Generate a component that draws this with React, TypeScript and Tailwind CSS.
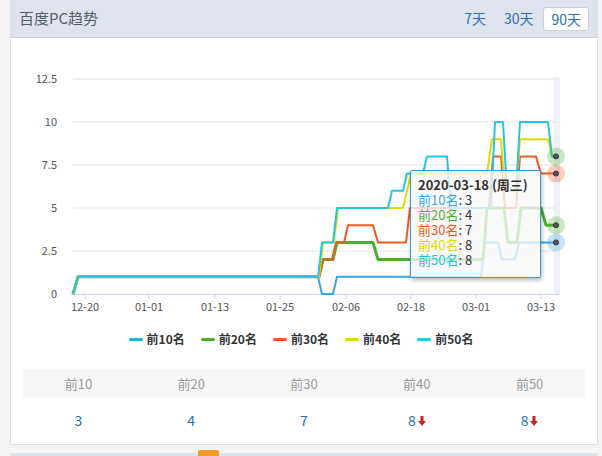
const Y = (v: number) => 294 - v * 17.2;

type S = { name: string; color: string; w: number; pts: [number, number][] };

const series: S[] = [
  { name: "前10名", color: "#3aa6df", w: 2, pts: [[72, 0], [77, 1], [317, 1], [321, 0], [332, 0], [336, 1], [480, 1], [484, 3], [497, 3], [501, 2], [514, 2], [518, 3], [555, 3]] },
  { name: "前20名", color: "#4caf2d", w: 3, pts: [[72, 0], [77, 1], [318, 1], [322, 2], [332, 2], [336, 3], [372, 3], [377, 2], [482, 2], [486, 5], [503, 5], [507, 3], [516, 3], [520, 5], [540, 5], [545, 4], [555, 4]] },
  { name: "前30名", color: "#f05a22", w: 2, pts: [[72, 0], [77, 1], [318, 1], [322, 2], [331, 2], [335, 3], [343, 3], [347, 4], [372, 4], [377, 3], [405, 3], [409, 5], [488, 5], [492, 8], [500, 8], [504, 5], [515, 5], [519, 8], [535, 8], [540, 7], [555, 7]] },
  { name: "前40名", color: "#dedc00", w: 2, pts: [[72, 0], [77, 1], [318, 1], [322, 3], [333, 3], [337, 5], [402, 5], [406, 6], [410, 7], [486, 7], [491, 9], [500, 9], [504, 6], [515, 6], [519, 9], [547, 9], [551, 8], [555, 8]] },
  { name: "前50名", color: "#26c4e4", w: 2, pts: [[72, 0], [77, 1], [317, 1], [321, 3], [332, 3], [336, 5], [387, 5], [391, 6], [402, 6], [406, 7], [422, 7], [426, 8], [446, 8], [450, 5], [490, 5], [494, 10], [502, 10], [506, 6], [515, 6], [519, 10], [547, 10], [551, 8], [555, 8]] },
];

const d = (pts: [number, number][]) => pts.map((p, i) => `${i ? "L" : "M"}${p[0]} ${Y(p[1])}`).join(" ");

const xLabels: [string, number][] = [["12-20", 84], ["01-01", 148], ["01-13", 214], ["01-25", 279], ["02-06", 345], ["02-18", 410], ["03-01", 475], ["03-13", 540]];
const yLabels = [0, 2.5, 5, 7.5, 10, 12.5];
const marks: [number, string][] = [[8, "#4caf2d"], [7, "#f05a22"], [4, "#4caf2d"], [3, "#3aa6df"]];

const Arrow = () => (
  <svg width="8" height="10" viewBox="0 0 8 10" className="ml-[2px] mt-[2px]">
    <path d="M2.5 0h3v5h2.5L4 10 0 5h2.5z" fill="#c0262d" />
  </svg>
);

export default function App() {
  const font = { fontFamily: '"Microsoft YaHei","Noto Sans CJK SC",sans-serif' };
  return (
    <div className="w-[602px] h-[456px] bg-[#f4f4f4] pl-[10px] pr-[4px] overflow-hidden" style={font}>
      <div className="bg-white border border-[#dcdfe6] border-t-0">
        <div className="h-[38px] bg-[#dfe3ee] border-b border-[#c9cfdd] flex items-center px-[8px]">
          <span className="text-[15px] text-[#555b6a]">百度PC趋势</span>
          <div className="ml-auto flex items-center gap-[2px] text-[14px] text-[#2c6fb3]">
            <span className="px-[8px]">7天</span>
            <span className="px-[8px]">30天</span>
            <span className="px-[7px] py-[1px] bg-white border border-[#c9cfdd] rounded-[3px] leading-[20px]">90天</span>
          </div>
        </div>
        <div className="relative h-[282px]">
          <svg width="588" height="282" viewBox="10 38 588 282" className="block">
            <rect x="553" y="77" width="6" height="217" fill="#eef1f8" />
            {yLabels.map((v) => (
              <g key={v}>
                {v > 0 && <line x1="72" x2="555" y1={Y(v)} y2={Y(v)} stroke="#e4e4e4" />}
                <text x="56" y={Y(v) + 4} textAnchor="end" fontSize="11" fill="#555">{v}</text>
              </g>
            ))}
            <line x1="70" x2="558" y1="294.5" y2="294.5" stroke="#c8d3e6" />
            {xLabels.map(([t, x]) => (
              <g key={t}>
                <line x1={x} x2={x} y1="294" y2="299" stroke="#c8d3e6" />
                <text x={x} y="311" textAnchor="middle" fontSize="11" fill="#555">{t}</text>
              </g>
            ))}
            {series.map((s) => (
              <path key={s.name} d={d(s.pts)} fill="none" stroke={s.color} strokeWidth={s.w} strokeLinejoin="round" />
            ))}
            {marks.map(([v, c], i) => (
              <g key={i}>
                <circle cx="555" cy={Y(v)} r="9" fill={c} opacity="0.3" />
                <circle cx="555" cy={Y(v)} r="2.5" fill="#555" stroke="#333" />
              </g>
            ))}
          </svg>
          <div className="absolute left-[399px] top-[132px] w-[131px] h-[108px] bg-[#f7f7f7]/80 border border-[#3a9bd8] rounded-[2px] shadow-[1px_2px_4px_rgba(0,0,0,0.3)] px-[7px] pt-[6px] text-[13px] leading-[15px] text-[#333]">
            <div className="font-bold">2020-03-18 (周三)</div>
            {series.map((s, i) => (
              <div key={s.name}>
                <span style={{ color: s.color }}>{s.name}</span>: {[3, 4, 7, 8, 8][i]}
              </div>
            ))}
          </div>
        </div>
        <div className="h-[38px] flex items-center justify-center gap-[16px] text-[12px] font-bold text-[#333] pr-[6px]">
          {series.map((s) => (
            <div key={s.name} className="flex items-center gap-[4px]">
              <span className="w-[14px] h-[3px] rounded" style={{ background: s.color }} />
              {s.name}
            </div>
          ))}
        </div>
        <div className="px-[11px] pt-[11px] pb-[2px]">
          <div className="grid grid-cols-5 h-[29px] bg-[#f8f8f8] text-[13px] text-[#999] items-center text-center">
            {["前10", "前20", "前30", "前40", "前50"].map((t) => <div key={t}>{t}</div>)}
          </div>
          <div className="grid grid-cols-5 h-[44px] text-[14px] text-[#2c6fb3] items-center text-center">
            <div>3</div>
            <div>4</div>
            <div>7</div>
            <div className="flex justify-center items-center">8<Arrow /></div>
            <div className="flex justify-center items-center">8<Arrow /></div>
          </div>
        </div>
      </div>
      <div className="mt-[8px] h-[20px] bg-[#dfe3ee] relative">
        <div className="absolute left-[188px] -top-[3px] w-[21px] h-[6px] bg-[#f39c28] rounded-t-[2px]" />
      </div>
    </div>
  );
}
